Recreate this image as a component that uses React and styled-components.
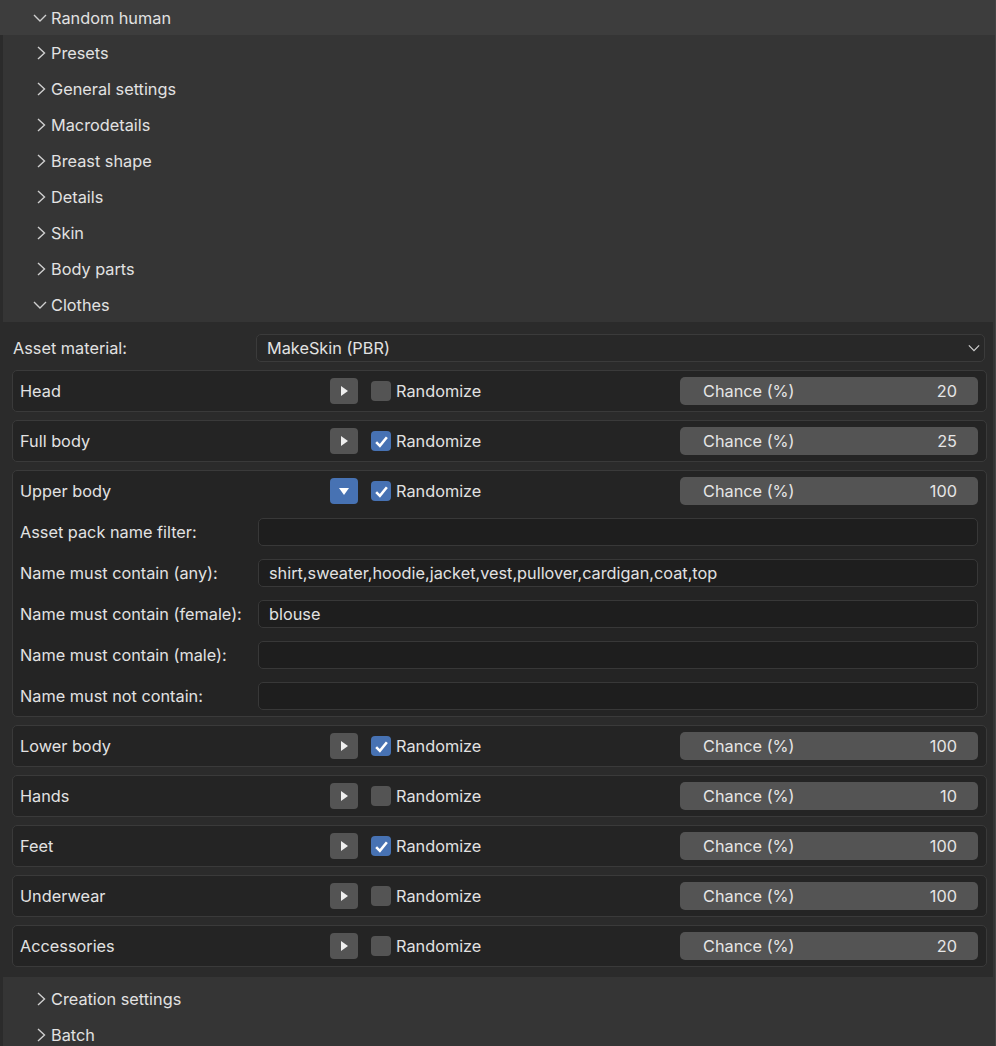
import styled, { createGlobalStyle } from "styled-components"

const Global = createGlobalStyle`
  body {
    margin: 0;
    background: #353535;
    font-family: Inter, "Noto Sans", sans-serif;
    color: #e2e2e2;
  }
`

const Page = styled.div`
  width: 996px;
  height: 1046px;
  overflow: hidden;
  background: #353535;
  box-sizing: border-box;
  border-right: 1px solid #444;
  font-size: 16.3px;
`

const TopHeader = styled.div`
  height: 35px;
  background: #3d3d3d;
  display: flex;
  align-items: center;
  padding-left: 33px;
  gap: 4px;
`

const Body = styled.div`
  border-left: 3px solid #2b2b2b;
`

const SubHeader = styled.div`
  height: 36px;
  display: flex;
  align-items: center;
  padding-left: ${p => (p.$open ? 30 : 31)}px;
  gap: ${p => (p.$open ? 4 : 5)}px;
`

const Panel = styled.div`
  background: #2b2b2b;
  padding: 12px 6px 10px 9px;
  margin: -1px 2px 4px 0;
  display: flex;
  flex-direction: column;
  gap: 8px;
`

const AssetRow = styled.div`
  display: grid;
  grid-template-columns: 243px 1fr;
  align-items: center;
  padding-left: 1px;
  padding-right: 2px;
`

const Dropdown = styled.div`
  height: 28px;
  background: #282828;
  border: 1px solid #3b3b3b;
  border-radius: 5px;
  display: flex;
  align-items: center;
  justify-content: space-between;
  padding: 0 4px 0 10px;
  box-sizing: border-box;
`

const Box = styled.div`
  background: #242424;
  border: 1px solid #3a3a3a;
  border-radius: 5px;
  box-sizing: border-box;
`

const ItemRow = styled.div`
  height: 40px;
  display: grid;
  grid-template-columns: 310px 28px 1fr 298px;
  align-items: center;
  padding: 0 8px 0 7px;
`

const PlayButton = styled.div`
  width: 28px;
  height: 26px;
  border-radius: 4px;
  background: ${p => (p.$open ? "#4772b3" : "#545454")};
  display: flex;
  align-items: center;
  justify-content: center;
`

const CheckWrap = styled.label`
  display: flex;
  align-items: center;
  gap: 5px;
  margin-left: 13px;
`

const Check = styled.span`
  width: 20px;
  height: 20px;
  border-radius: 4px;
  background: ${p => (p.$on ? "#4772b3" : "#545454")};
  display: flex;
  align-items: center;
  justify-content: center;
`

const Slider = styled.div`
  height: 28px;
  border-radius: 5px;
  background: #545454;
  display: flex;
  align-items: center;
  justify-content: space-between;
  padding: 0 21px 0 23px;
  color: #e6e6e6;
`

const Fields = styled.div`
  display: flex;
  flex-direction: column;
  gap: 13px;
  padding: 7px 8px 6px 7px;
`

const FieldRow = styled.div`
  display: grid;
  grid-template-columns: 238px 1fr;
  align-items: center;
`

const Input = styled.div`
  height: 28px;
  background: #1e1e1e;
  border: 1px solid #383838;
  border-radius: 5px;
  box-sizing: border-box;
  display: flex;
  align-items: center;
  padding-left: 10px;
`

const ChevronDown = ({ w = 14 }) => (
  <svg width={w} height="10" viewBox="0 0 14 10">
    <polyline points="1,2 7,8 13,2" fill="none" stroke="#cfcfcf" strokeWidth="1.4" />
  </svg>
)

const ChevronRight = () => (
  <svg width="12" height="14" viewBox="0 0 12 14">
    <polyline points="4,1 10.5,7 4,13" fill="none" stroke="#cfcfcf" strokeWidth="1.4" />
  </svg>
)

const Triangle = ({ down }) => (
  <svg width="12" height="12" viewBox="0 0 12 12">
    {down ? (
      <polygon points="1,3 11,3 6,10" fill="#fff" />
    ) : (
      <polygon points="3,1 10,6 3,11" fill="#eee" />
    )}
  </svg>
)

const Tick = () => (
  <svg width="15" height="15" viewBox="0 0 14 14">
    <polyline points="2,7.5 5.5,11 12,3" fill="none" stroke="#fff" strokeWidth="2.4" />
  </svg>
)

const headersTop = ["Presets", "General settings", "Macrodetails", "Breast shape", "Details", "Skin", "Body parts"]

const items = [
  { name: "Head", on: false, chance: 20 },
  { name: "Full body", on: true, chance: 25 },
  { name: "Upper body", on: true, chance: 100, open: true },
  { name: "Lower body", on: true, chance: 100 },
  { name: "Hands", on: false, chance: 10 },
  { name: "Feet", on: true, chance: 100 },
  { name: "Underwear", on: false, chance: 100 },
  { name: "Accessories", on: false, chance: 20 },
]

const fields = [
  ["Asset pack name filter:", ""],
  ["Name must contain (any):", "shirt,sweater,hoodie,jacket,vest,pullover,cardigan,coat,top"],
  ["Name must contain (female):", "blouse"],
  ["Name must contain (male):", ""],
  ["Name must not contain:", ""],
]

function Item({ item }) {
  return (
    <Box>
      <ItemRow>
        <span>{item.name}</span>
        <PlayButton $open={item.open}>
          <Triangle down={item.open} />
        </PlayButton>
        <CheckWrap>
          <Check $on={item.on}>{item.on && <Tick />}</Check>
          Randomize
        </CheckWrap>
        <Slider>
          <span>Chance (%)</span>
          <span>{item.chance}</span>
        </Slider>
      </ItemRow>
      {item.open && (
        <Fields>
          {fields.map(([label, value]) => (
            <FieldRow key={label}>
              <span>{label}</span>
              <Input>{value}</Input>
            </FieldRow>
          ))}
        </Fields>
      )}
    </Box>
  )
}

export default function App() {
  return (
    <Page>
      <Global />
      <TopHeader>
        <ChevronDown />
        Random human
      </TopHeader>
      <Body>
        {headersTop.map(h => (
          <SubHeader key={h}>
            <ChevronRight />
            {h}
          </SubHeader>
        ))}
        <SubHeader $open>
          <ChevronDown />
          Clothes
        </SubHeader>
        <Panel>
          <AssetRow>
            <span>Asset material:</span>
            <Dropdown>
              <span>MakeSkin (PBR)</span>
              <ChevronDown w={12} />
            </Dropdown>
          </AssetRow>
          {items.map(it => (
            <Item key={it.name} item={it} />
          ))}
        </Panel>
        <SubHeader>
          <ChevronRight />
          Creation settings
        </SubHeader>
        <SubHeader>
          <ChevronRight />
          Batch
        </SubHeader>
      </Body>
    </Page>
  )
}
